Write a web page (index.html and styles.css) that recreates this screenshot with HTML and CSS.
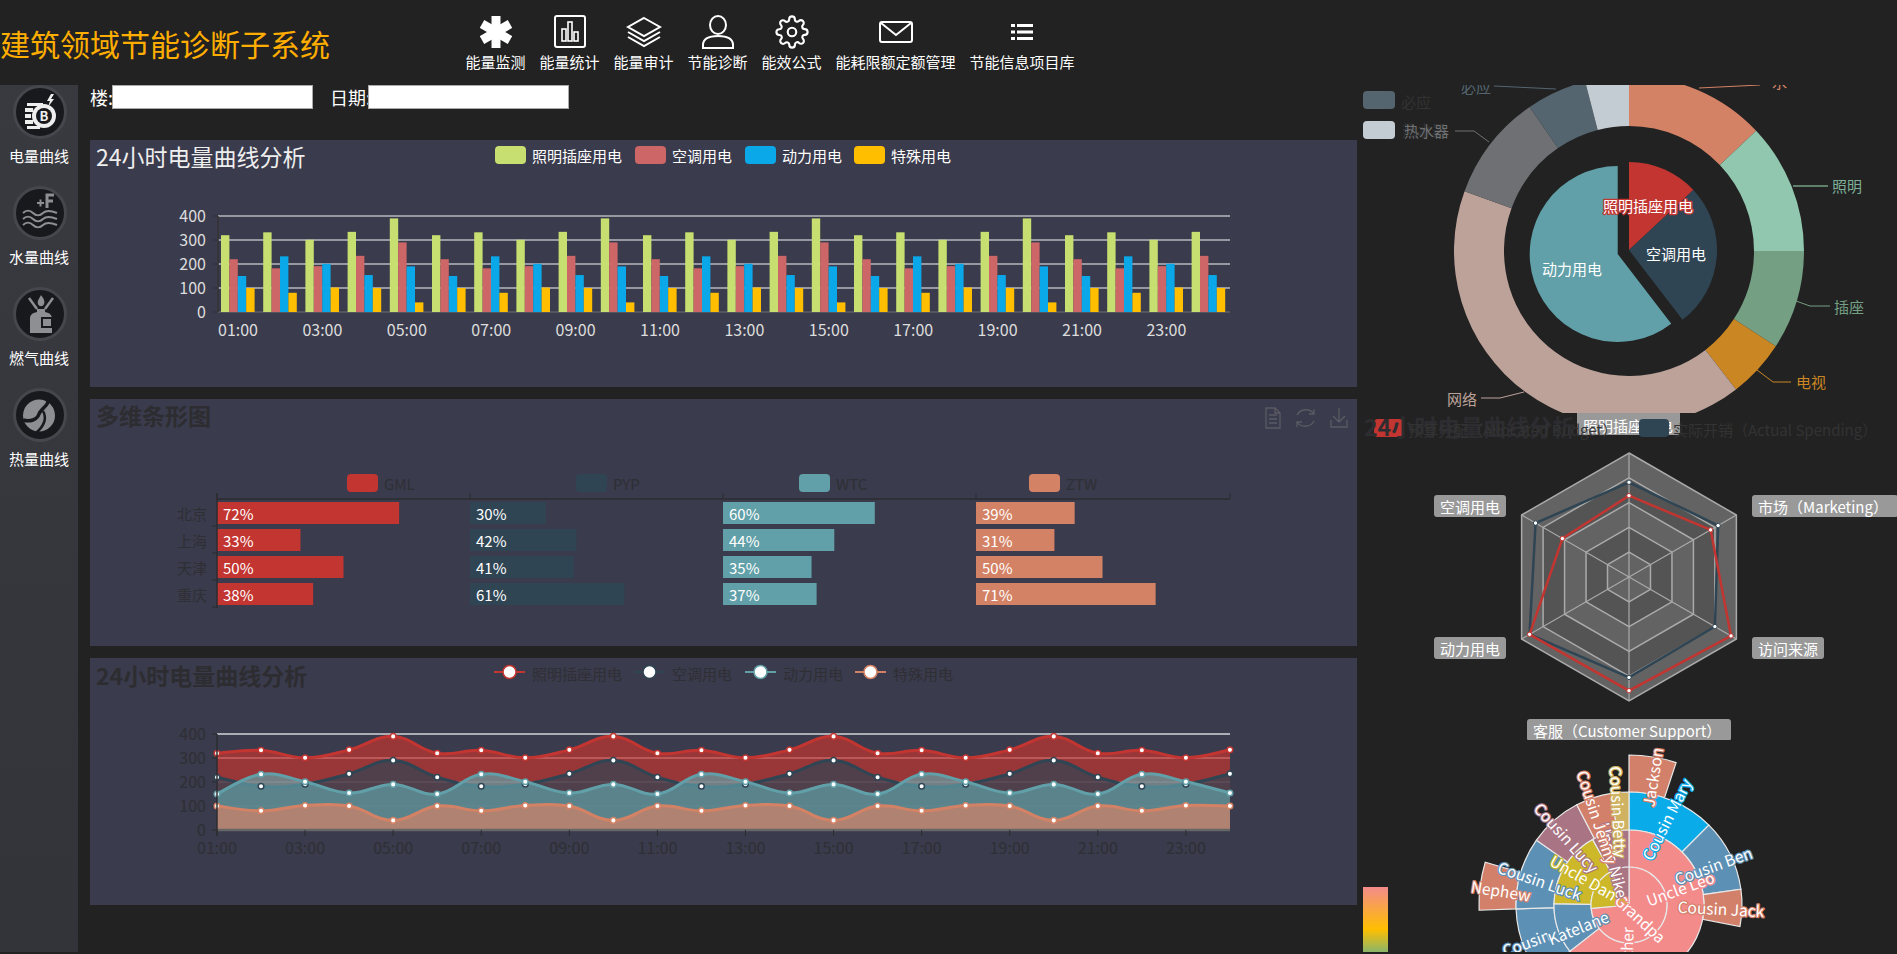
FILE: index.html
```html
<!DOCTYPE html>
<html lang="zh-CN">
<head>
<meta charset="UTF-8" />
<title>建筑领域节能诊断子系统</title>
<link rel="stylesheet" href="styles.css">
</head>
<body>

<div class="top">
    <div class="logo">建筑领域节能诊断子系统</div>
    <div class="nav">
        <div class="nav-item">
            <div class="nav-icon">
                <svg width="32" height="34" viewBox="0 0 32 34"><g stroke="#fff" stroke-width="9"><path d="M16 1V33"/><path d="M2 9L30 25"/><path d="M2 25L30 9"/></g></svg>
            </div>
            <span>能量监测</span>
        </div>
        <div class="nav-item">
            <div class="nav-icon">
                <svg width="32" height="33" viewBox="0 0 32 33" fill="none" stroke="#fff" stroke-width="1.6"><rect x="1" y="1" width="30" height="31" rx="2" stroke-width="2"/><rect x="8" y="14" width="4" height="12"/><rect x="14" y="7" width="4" height="19"/><rect x="20" y="17" width="4" height="9"/></svg>
            </div>
            <span>能量统计</span>
        </div>
        <div class="nav-item">
            <div class="nav-icon">
                <svg width="36" height="32" viewBox="0 0 36 32" fill="none" stroke="#fff" stroke-width="2"><path d="M18 2L34 11L18 20L2 11Z"/><path d="M2 16L18 25L34 16"/><path d="M2 21L18 30L34 21"/></svg>
            </div>
            <span>能量审计</span>
        </div>
        <div class="nav-item">
            <div class="nav-icon">
                <svg width="34" height="34" viewBox="0 0 34 34" fill="none" stroke="#fff" stroke-width="2"><ellipse cx="17" cy="10" rx="8" ry="9"/><path d="M2 33V30C2 24 8 21 17 21C26 21 32 24 32 30V33Z"/></svg>
            </div>
            <span>节能诊断</span>
        </div>
        <div class="nav-item">
            <div class="nav-icon">
                <svg width="34" height="34" viewBox="0 0 24 24" fill="none" stroke="#fff" stroke-width="1.5"><circle cx="12" cy="12" r="3"/><path d="M19.4 15a1.65 1.65 0 0 0 .33 1.82l.06.06a2 2 0 0 1 0 2.83 2 2 0 0 1-2.83 0l-.06-.06a1.65 1.65 0 0 0-1.82-.33 1.65 1.65 0 0 0-1 1.51V21a2 2 0 0 1-2 2 2 2 0 0 1-2-2v-.09A1.65 1.65 0 0 0 9 19.4a1.65 1.65 0 0 0-1.82.33l-.06.06a2 2 0 0 1-2.83 0 2 2 0 0 1 0-2.83l.06-.06a1.65 1.65 0 0 0 .33-1.82 1.65 1.65 0 0 0-1.51-1H3a2 2 0 0 1-2-2 2 2 0 0 1 2-2h.09A1.65 1.65 0 0 0 4.6 9a1.65 1.65 0 0 0-.33-1.82l-.06-.06a2 2 0 0 1 0-2.83 2 2 0 0 1 2.83 0l.06.06a1.65 1.65 0 0 0 1.82.33H9a1.65 1.65 0 0 0 1-1.51V3a2 2 0 0 1 2-2 2 2 0 0 1 2 2v.09a1.65 1.65 0 0 0 1 1.51 1.65 1.65 0 0 0 1.82-.33l.06-.06a2 2 0 0 1 2.83 0 2 2 0 0 1 0 2.83l-.06.06a1.65 1.65 0 0 0-.33 1.82V9a1.65 1.65 0 0 0 1.51 1H21a2 2 0 0 1 2 2 2 2 0 0 1-2 2h-.09a1.65 1.65 0 0 0-1.51 1z"/></svg>
            </div>
            <span>能效公式</span>
        </div>
        <div class="nav-item">
            <div class="nav-icon">
                <svg width="34" height="22" viewBox="0 0 34 22" fill="none" stroke="#fff" stroke-width="2"><rect x="1" y="1" width="32" height="20" rx="2"/><path d="M2 2L17 14L32 2"/></svg>
            </div>
            <span>能耗限额定额管理</span>
        </div>
        <div class="nav-item">
            <div class="nav-icon">
                <svg width="22" height="16" viewBox="0 0 22 16" fill="#fff"><rect x="0" y="0" width="4" height="3"/><rect x="6" y="0" width="16" height="3"/><rect x="0" y="6.5" width="4" height="3"/><rect x="6" y="6.5" width="16" height="3"/><rect x="0" y="13" width="4" height="3"/><rect x="6" y="13" width="16" height="3"/></svg>
            </div>
            <span>节能信息项目库</span>
        </div>
    </div>
</div>

<div class="page">
    <div class="side">
        <div class="side-item">
            <div class="circle">
                <svg width="48" height="48" viewBox="0 0 48 48">
                    <path d="M35 6L31 13H34L32 19L38 11H35L38 6Z" fill="#eee"/>
                    <path d="M11 15H27V18H11ZM9 20H17V24H9ZM9 26H15V30H9ZM9 32H17V36H9ZM11 38H24V41H11Z" fill="#eee"/>
                    <circle cx="28" cy="28" r="12" fill="#eee"/>
                    <circle cx="28" cy="28" r="8" fill="#18191d"/>
                    <text x="28" y="27.500" class="coin">B</text>
                </svg>
            </div>
            <span>电量曲线</span>
        </div>
        <div class="side-item">
            <div class="circle">
                <svg width="48" height="48" viewBox="0 0 48 48" fill="none" stroke="#8e8f93" stroke-width="2">
                    <path d="M21 14H28M24.500 10.500V17.500"/>
                    <path d="M31 19V6H38M31 12H37" stroke-width="3"/>
                    <path d="M7 24C10 21 14 21 17 24S24 27 27 24S34 21 41 24"/>
                    <path d="M7 30C10 27 14 27 17 30S24 33 27 30S34 27 41 30"/>
                    <path d="M7 36C10 33 14 33 17 36S24 39 27 36S34 33 41 36"/>
                </svg>
            </div>
            <span>水量曲线</span>
        </div>
        <div class="side-item">
            <div class="circle">
                <svg width="48" height="48" viewBox="0 0 48 48">
                    <path d="M25 5C28 9 29 11 28 14C27 17 23 17 22 14C21 11 23 9 25 5Z" fill="#8e8f93"/>
                    <path d="M13 8L21 19M37 8L29 19" stroke="#8e8f93" stroke-width="2.500"/>
                    <path d="M21 19H29V22C34 23 36 25 36 29V43H14V29C14 25 16 23 21 22Z" fill="#8e8f93"/>
                    <rect x="26" y="28" width="10" height="9" fill="#8e8f93" stroke="#18191d" stroke-width="2"/>
                </svg>
            </div>
            <span>燃气曲线</span>
        </div>
        <div class="side-item">
            <div class="circle">
                <svg width="48" height="48" viewBox="0 0 48 48">
                    <circle cx="23" cy="24.500" r="16" fill="#8e8f93"/>
                    <path d="M33 12C40 20 40 31 31 38C34 31 32 27 29 25Z" fill="#8e8f93"/>
                    <path d="M31 7C35 14 25 17 23 23C21 29 14 31 7 29" fill="none" stroke="#18191d" stroke-width="3.500"/>
                    <path d="M27 20C31 27 28 35 20 42" fill="none" stroke="#18191d" stroke-width="2.500"/>
                </svg>
            </div>
            <span>热量曲线</span>
        </div>
    </div>

    <div class="main">
        <div class="search">
            <label class="floor-label">楼:</label><input type="text" class="box">
            <label class="date-label">日期:</label><input type="text" class="box">
        </div>
        <div class="panel" id="barPanel"></div>
        <div class="panel" id="multiPanel"></div>
        <div class="panel" id="linePanel"></div>
    </div>

    <div class="right">
        <div class="canvas pie-box" id="pieBox"></div>
        <div class="canvas radar-box" id="radarBox"></div>
        <div class="canvas sun-box" id="sunBox"></div>
    </div>
</div>

<script src="charts.js"></script>
</body>
</html>
```

FILE: styles.css
```css
body {
    margin: 0;
    background: #222;
    color: #fff;
    font-family: "Noto Sans CJK SC", "Open Sans", sans-serif;
    overflow: hidden;
}

.top {
    display: flex;
    height: 85px;
}

.logo {
    width: 330px;
    margin-right: 135.5px;
    font-size: 30px;
    line-height: 86px;
    color: #ffae00;
    white-space: nowrap;
}

.nav {
    display: flex;
    gap: 14px;
    padding-top: 11px;
}

.nav-item {
    display: flex;
    flex-direction: column;
    align-items: center;
    font-size: 15px;
    line-height: 20px;
    white-space: nowrap;
}

.nav-icon {
    display: flex;
    align-items: center;
    justify-content: center;
    height: 41px;
}

.page {
    display: grid;
    grid-template-columns: 78px 1279px 540px;
    height: 867px;
}

.side {
    display: flex;
    flex-direction: column;
    gap: 13px;
    background: linear-gradient(#393a40, #33343a);
    overflow: hidden;
}

.side-item {
    display: flex;
    flex-direction: column;
    align-items: center;
    font-size: 15px;
    line-height: 20px;
    height: 88px;
}

.circle {
    display: flex;
    align-items: center;
    justify-content: center;
    box-sizing: border-box;
    width: 54px;
    height: 54px;
    margin: 0 0 7px 2px;
    border: 3px solid #46474d;
    border-radius: 50%;
    background: #18191d;
    overflow: hidden;
}

.main {
    display: flex;
    flex-direction: column;
    gap: 12px;
    padding-left: 12px;
}

.search {
    display: flex;
    align-items: flex-start;
    height: 43px;
    font-size: 18px;
    line-height: 24px;
    white-space: nowrap;
}

.floor-label {
    flex: 0 0 22px;
    min-width: 0;
}

.date-label {
    flex: 0 0 38px;
    min-width: 0;
    margin-left: 17px;
}

.box {
    box-sizing: border-box;
    flex: 0 0 201px;
    height: 24px;
    margin: 0;
    border: 1px solid #aaa;
    background: #fff;
}

.panel {
    height: 247px;
    background: #3a3b4c;
}

.canvas {
    overflow: hidden;
}

.pie-box { height: 328px; }
.radar-box { height: 327px; }
.sun-box { height: 212px; }

svg {
    display: block;
}

svg text {
    font-family: "Noto Sans CJK SC", "Open Sans", sans-serif;
    font-size: 15px;
    dominant-baseline: central;
}

svg text.coin {
    font-size: 13px;
    font-weight: bold;
    fill: #eee;
    text-anchor: middle;
}

svg text.title {
    font-size: 23px;
    font-weight: bold;
    fill: #2d2d31;
}

svg text.title-on {
    font-weight: normal;
    fill: #eee;
}

svg text.axis { font-size: 16px; }
svg text.dim { fill: #2f2f35; }
svg text.soft { fill: #ddd; }
svg text.white { fill: #fff; }
svg text.end { text-anchor: end; }
svg text.mid { text-anchor: middle; }

svg text.glow {
    paint-order: stroke;
    stroke-width: 2.5px;
    stroke-linejoin: round;
    fill: #fff;
    text-anchor: middle;
}

svg text.sun { font-size: 15.5px; }
```

FILE: charts.js
```js
// colours of the chart theme
const RED = "#c23531", DARK = "#2f4554", TEAL = "#61a0a8", ORANGE = "#d48265";

// the four series repeat every 5 hours
const ROWS = [
    [320, 220, 150, 100],
    [332, 182, 232, 80],
    [301, 191, 201, 102],
    [334, 234, 154, 100],
    [390, 290, 190, 40]
];

function svg(x, y, w, h, body) {
    return `<svg width="${w}" height="${h}" viewBox="${x} ${y} ${w} ${h}">${body}</svg>`;
}

function text(x, y, s, cls, extra) {
    return `<text x="${x}" y="${y}" class="${cls}" ${extra || ""}>${s}</text>`;
}

function line(x1, y1, x2, y2, color, w) {
    return `<line x1="${x1}" y1="${y1}" x2="${x2}" y2="${y2}" stroke="${color}" stroke-width="${w || 1}"/>`;
}

function rect(x, y, w, h, color, r) {
    return `<rect x="${x}" y="${y}" width="${w}" height="${h}" fill="${color}" rx="${r || 0}"/>`;
}

function poly(points, color, w) {
    return `<polyline points="${points}" fill="none" stroke="${color}" stroke-width="${w || 1}"/>`;
}

function hourLabel(i) {
    return String(i + 1).padStart(2, "0") + ":00";
}

// degrees run clockwise from the top
function polar(cx, cy, r, a) {
    const t = a * Math.PI / 180;
    return [cx + r * Math.sin(t), cy - r * Math.cos(t)];
}

function arc(cx, cy, r0, r1, a0, a1, color, border) {
    const big = a1 - a0 > 180 ? 1 : 0;
    const p1 = polar(cx, cy, r1, a0), p2 = polar(cx, cy, r1, a1);
    const p3 = polar(cx, cy, r0, a1), p4 = polar(cx, cy, r0, a0);
    let d = `M${p1}A${r1} ${r1} 0 ${big} 1 ${p2}L${p3}`;
    if (r0 > 0) d += `A${r0} ${r0} 0 ${big} 0 ${p4}`;
    return `<path d="${d}Z" fill="${color}" ${border ? `stroke="${border}" stroke-width="1.2"` : ""}/>`;
}

/* 24 hour bars */
function drawBars() {
    const colors = ["#c6df70", "#cd6666", "#0aa8e8", "#ffbf00"];
    const names = ["照明插座用电", "空调用电", "动力用电", "特殊用电"];
    const swatch = [495, 635, 745, 854];
    let s = text(96, 156, "24小时电量曲线分析", "title title-on");

    names.forEach((n, i) => {
        s += rect(swatch[i], 146, 31, 18, colors[i], 4);
        s += text(swatch[i] + 37, 155, n, "white");
    });

    for (let v = 0; v <= 400; v += 100) {
        const y = 312 - v * 0.24;
        s += line(218, y, 1230, y, v ? "#b9b9c0" : "#55565c", v ? 1.5 : 2);
        s += line(213, y, 218, y, "#333");
        s += text(206, y - 1, v, "axis soft end");
    }
    s += line(218, 216, 218, 312, "#333", 1.5);

    for (let i = 0; i < 24; i++) {
        ROWS[i % 5].forEach((v, j) => {
            s += rect(221 + i * 42.2 + j * 8.4, 312 - v * 0.24, 8.4, v * 0.24, colors[j]);
        });
        if (i % 2 === 0) s += text(238 + i * 42.2, 329, hourLabel(i), "axis soft mid");
    }
    document.getElementById("barPanel").innerHTML = svg(90, 140, 1267, 247, s);
}

/* bars per city */
function drawMulti() {
    const cities = ["北京", "上海", "天津", "重庆"];
    const series = [
        { name: "GML", color: RED, x: 217, sw: 347, vals: [72, 33, 50, 38] },
        { name: "PYP", color: DARK, x: 470, sw: 576, vals: [30, 42, 41, 61] },
        { name: "WTC", color: TEAL, x: 723, sw: 799, vals: [60, 44, 35, 37] },
        { name: "ZTW", color: ORANGE, x: 976, sw: 1029, vals: [39, 31, 50, 71] }
    ];
    let s = text(96, 415, "多维条形图", "title");

    series.forEach(b => {
        s += rect(b.sw, 474, 31, 18, b.color, 4);
        s += text(b.sw + 37, 483, b.name, "dim");
        s += line(b.x, 493, b.x, 499, "#2d2d31");
        b.vals.forEach((v, i) => {
            const y = 502 + i * 27;
            s += rect(b.x, y, v * 2.53, 22, b.color);
            s += text(b.x + 6, y + 11, v + "%", "white");
        });
    });

    s += line(217, 499, 1230, 499, "#2d2d31", 1.5);
    s += line(1230, 493, 1230, 499, "#2d2d31");
    s += line(217, 493, 217, 608, "#2d2d31", 1.5);
    cities.forEach((c, i) => {
        s += text(207, 513 + i * 27, c, "dim end");
        s += line(212, 526 + i * 27, 217, 526 + i * 27, "#2d2d31");
    });

    // toolbox
    s += `<g fill="none" stroke="#5a5b63" stroke-width="1.3">
        <path d="M1266 408H1275L1280 413V428H1266ZM1275 408V413H1280M1269 415H1277M1269 419H1277M1269 423H1277"/>
        <path d="M1297 415A10 10 0 0 1 1314 414M1314 421A10 10 0 0 1 1297 422M1314 409V414H1309M1297 427V422H1302"/>
        <path d="M1339 408V422M1333 416L1339 422L1345 416M1331 420V427H1347V420"/>
    </g>`;
    document.getElementById("multiPanel").innerHTML = svg(90, 399, 1267, 247, s);
}

function smoothPath(p) {
    let d = `M${p[0]}`;
    for (let i = 0; i < p.length - 1; i++) {
        const a = p[Math.max(i - 1, 0)], b = p[i], c = p[i + 1], e = p[Math.min(i + 2, p.length - 1)];
        d += `C${b[0] + (c[0] - a[0]) * 0.2} ${b[1] + (c[1] - a[1]) * 0.2} ${c[0] - (e[0] - b[0]) * 0.2} ${c[1] - (e[1] - b[1]) * 0.2} ${c[0]} ${c[1]}`;
    }
    return d;
}

/* 24 hour areas */
function drawLines() {
    const colors = [RED, DARK, TEAL, ORANGE];
    const names = [["照明插座用电", 494], ["空调用电", 634], ["动力用电", 745], ["特殊用电", 855]];
    const toY = v => 830 - v * 0.24;
    let s = text(96, 675, "24小时电量曲线分析", "title");

    names.forEach((n, i) => {
        s += line(n[1], 672, n[1] + 31, 672, colors[i], 2);
        s += `<circle cx="${n[1] + 15.500}" cy="672" r="6.500" fill="#fff" stroke="${colors[i]}" stroke-width="1.500"/>`;
        s += text(n[1] + 38, 673, n[0], "dim");
    });

    for (let v = 0; v <= 400; v += 100) {
        const y = toY(v);
        if (v) s += line(217, y, 1230, y, "#d4d4d8", 1.5);
        s += line(212, y, 217, y, "#2d2d31");
        s += text(206, y - 1, v, "axis dim end");
    }

    let dots = "";
    colors.forEach((color, j) => {
        const pts = [];
        for (let i = 0; i < 24; i++) pts.push([217 + i * 44.04, toY(ROWS[i % 5][j])]);
        const path = smoothPath(pts);
        s += `<path d="${path}L1230 830L217 830Z" fill="${color}" fill-opacity="0.7"/>`;
        s += `<path d="${path}" fill="none" stroke="${color}" stroke-width="3"/>`;
        pts.forEach(p => {
            dots += `<circle cx="${p[0]}" cy="${p[1]}" r="2.800" fill="#fff" stroke="${color}" stroke-width="1.500"/>`;
        });
    });
    s += dots;

    s += line(217, 830, 1230, 830, "#666", 2.5);
    s += line(217, 734, 217, 836, "#2d2d31", 1.5);
    for (let i = 0; i < 23; i += 2) {
        const x = 217 + i * 44.04;
        s += line(x, 830, x, 836, "#2d2d31");
        s += text(x, 847, hourLabel(i), "axis dim mid");
    }
    document.getElementById("linePanel").innerHTML = svg(90, 658, 1267, 247, s);
}

/* nested pie */
function drawPie() {
    const cx = 1629, cy = 251;
    const ring = [
        [0, 46.6, ORANGE], [46.6, 90, "#91c7ae"], [90, 123, "#749f83"], [123, 142.3, "#ca8622"],
        [142.3, 290, "#bda29a"], [290, 325.4, "#6e7074"], [325.4, 345.5, "#546570"], [345.5, 360, "#c4ccd3"]
    ];
    let s = "";
    ring.forEach(r => { s += arc(cx, cy, 125, 175, r[0], r[1], r[2]); });

    s += arc(1629, 250, 0, 88, 0, 47, RED);
    s += arc(1629, 250, 0, 88, 47, 142.5, DARK);
    s += arc(1617.7, 254, 0, 88, 142.5, 360, TEAL);

    s += text(1648, 205, "照明插座用电", "glow", `stroke="${RED}"`);
    s += text(1676, 253, "空调用电", "glow", `stroke="${DARK}"`);
    s += text(1572, 268, "动力用电", "glow", `stroke="${TEAL}"`);

    // labels of the outer ring
    s += poly("1699,88 1760,85", ORANGE);
    s += text(1772, 81, "水", "", `fill="${ORANGE}"`);
    s += poly("1793,186 1828,186", "#749f83", 1.5);
    s += text(1832, 185, "照明", "", 'fill="#7fae98"');
    s += poly("1796,301 1810,306 1830,306", "#749f83");
    s += text(1834, 306, "插座", "", 'fill="#749f83"');
    s += poly("1757,370 1773,382 1791,382", "#ca8622");
    s += text(1796, 381, "电视", "", 'fill="#ca8622"');
    s += poly("1524,392 1500,398 1481,398", "#bda29a");
    s += text(1447, 398, "网络", "", 'fill="#bda29a"');
    s += poly("1494,86 1556,89", "#546570");
    s += text(1461, 86, "必应", "", 'fill="#546570"');
    s += poly("1455,131 1474,131 1489,142", "#6e7074");

    // legend
    s += rect(1363, 91, 32, 18, "#546570", 4);
    s += text(1401, 101, "必应", "", 'fill="#333"');
    s += rect(1363, 121, 32, 18, "#c4ccd3", 4);
    s += text(1402, 129, "热水器", "", 'fill="#333"');
    s += text(1404, 130, "热水器", "", 'fill="#6e7074"');
    document.getElementById("pieBox").innerHTML = svg(1357, 85, 540, 328, s);
}

/* radar */
function drawRadar() {
    const cx = 1629, cy = 577, R = 124;
    const hex = vals => vals.map((v, i) => polar(cx, cy, v * R, i * 60).join(",")).join(" ");
    let s = "";

    // tag under the legend
    s += rect(1577, 400, 103, 35, "#999", 3);
    s += text(1628, 425, "照明插座用电", "white mid");

    s += rect(1374, 419, 29, 18, RED, 4);
    s += text(1364, 426, "24小时电量曲线分析", "title");
    s += text(1408, 429, "预算分配（Allocated Budget）", "", 'fill="#333"');
    s += rect(1639, 419, 30, 18, DARK, 4);
    s += text(1673, 429, "实际开销（Actual Spending）", "", 'fill="#333"');

    for (let k = 5; k >= 1; k--) {
        s += `<polygon points="${hex(Array(6).fill(k / 5))}" fill="${k % 2 ? "#636363" : "#545454"}" stroke="#aaa" stroke-width="1.5"/>`;
    }
    for (let i = 0; i < 6; i++) {
        const p = polar(cx, cy, R, i * 60);
        s += line(cx, cy, p[0], p[1], "#aaa", 1.2);
    }

    const series = [
        [DARK, [0.764, 0.83, 0.80, 0.81, 0.926, 0.87]],
        [RED, [0.656, 0.76, 0.95, 0.917, 0.926, 0.62]]
    ];
    series.forEach(item => {
        s += `<polygon points="${hex(item[1])}" fill="none" stroke="${item[0]}" stroke-width="2.500"/>`;
        item[1].forEach((v, i) => {
            const p = polar(cx, cy, v * R, i * 60);
            s += `<circle cx="${p[0]}" cy="${p[1]}" r="2.200" fill="#fff" stroke="${item[0]}"/>`;
        });
    });

    const tags = [
        [1434, 495, 72, "空调用电"], [1752, 495, 146, "市场（Marketing）"],
        [1434, 637, 72, "动力用电"], [1752, 637, 72, "访问来源"],
        [1527, 719, 204, "客服（Customer Support）"]
    ];
    tags.forEach(t => {
        s += rect(t[0], t[1], t[2], 22, "#999", 3);
        s += text(t[0] + 6, t[1] + 11, t[3], "white");
    });
    document.getElementById("radarBox").innerHTML = svg(1357, 413, 540, 327, s);
}

/* sunburst */
function drawSun() {
    const cx = 1629, cy = 905;
    const PINK = "#f38b8b", BLUE = "#0aabe9", STEEL = "#5d90b5", YELLOW = "#ccb828",
        TAN = "#cfb362", SALMON = "#d3806a", MAUVE = "#a97584";
    const parts = [
        [113, 150, 0, 18.3, SALMON], [113, 150, 268, 286.6, SALMON],
        [75, 113, 0, 45, BLUE], [75, 113, 45, 82, STEEL], [75, 113, 82, 101, SALMON],
        [75, 113, 232, 268, STEEL], [75, 113, 268, 305, STEEL], [75, 113, 305, 332.5, MAUVE],
        [75, 113, 332.5, 351, SALMON], [75, 113, 351, 360, TAN],
        [38, 75, 0, 232, PINK], [38, 75, 232, 271, STEEL], [38, 75, 271, 331, YELLOW], [38, 75, 331, 360, MAUVE],
        [0, 38, 0, 265, PINK], [0, 38, 265, 332, YELLOW], [0, 38, 332, 360, MAUVE]
    ];
    const labels = [
        ["Grandpa", 1641, 918, 43, PINK], ["Father", 1626, 950, -88, PINK],
        ["Uncle Leo", 1680, 888, -20, PINK], ["Jackson", 1652, 777, -81, SALMON],
        ["Cousin Mary", 1666, 819, -63, BLUE], ["Cousin Ben", 1713, 865, -20, STEEL],
        ["Cousin Jack", 1721, 908, 3, SALMON], ["Uncle Nike", 1614, 860, 76, MAUVE],
        ["Cousin Betty", 1619, 812, 87, TAN], ["Cousin Jenny", 1598, 817, 72, SALMON],
        ["Cousin Lucy", 1567, 837, 48, MAUVE], ["Uncle Dan", 1584, 877, 30, YELLOW],
        ["Cousin Luck", 1540, 880, 19, STEEL], ["Nephew", 1501, 890, 9, SALMON],
        ["Cousin", 1526, 942, -20, STEEL], ["Katelane", 1578, 927, -22, STEEL]
    ];
    let s = "";
    parts.forEach(p => { s += arc(cx, cy, p[0], p[1], p[2], p[3], p[4], "#e8e8e8"); });
    labels.forEach(l => {
        s += text(l[1], l[2], l[0], "glow sun", `stroke="${l[4]}" transform="rotate(${l[3]} ${l[1]} ${l[2]})"`);
    });

    // colour bar of the visual map
    s += `<defs><linearGradient id="mapBar" x1="0" y1="0" x2="0" y2="1">
        <stop offset="0" stop-color="${PINK}"/><stop offset="0.65" stop-color="#ffbf00"/><stop offset="1" stop-color="#8ab56a"/>
    </linearGradient></defs>`;
    s += rect(1363, 887, 25, 65, "url(#mapBar)");
    document.getElementById("sunBox").innerHTML = svg(1357, 740, 540, 212, s);
}

drawBars();
drawMulti();
drawLines();
drawPie();
drawRadar();
drawSun();
```
